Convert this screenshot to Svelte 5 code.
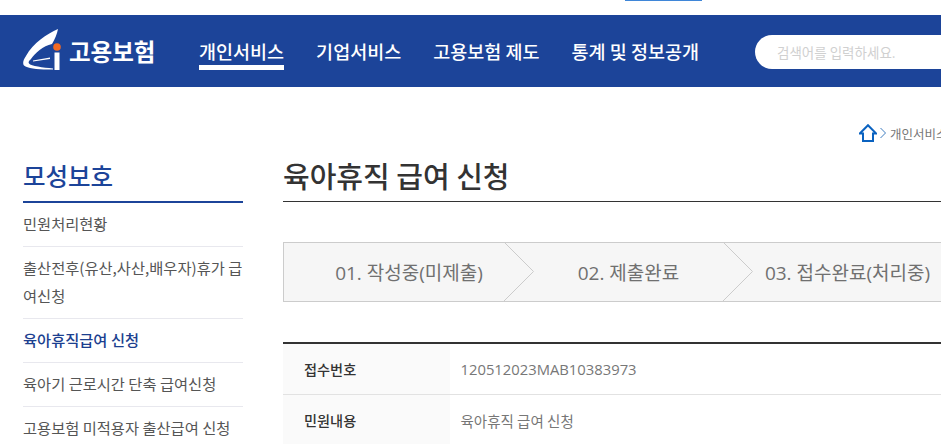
<script>
  const nav = ['개인서비스', '기업서비스', '고용보험 제도', '통계 및 정보공개'];
  const side = [
    { t: '민원처리현황' },
    { t: '출산전후(유산,사산,배우자)휴가 급여신청' },
    { t: '육아휴직급여 신청', on: true },
    { t: '육아기 근로시간 단축 급여신청' },
    { t: '고용보험 미적용자 출산급여 신청' }
  ];
  const steps = ['01. 작성중(미제출)', '02. 제출완료', '03. 접수완료(처리중)'];
  const rows = [
    { k: '접수번호', v: '120512023MAB10383973', num: true },
    { k: '민원내용', v: '육아휴직 급여 신청' }
  ];
</script>

<div class="page">
  <div class="strip"><span></span></div>
  <header>
    <div class="logo">
      <svg width="40" height="42" viewBox="0 0 40 42" aria-hidden="true">
        <path d="M35 0 C24 5 10 14 3 27 C0 31 -0.500 35 1 36.500 C5 39.500 16 41 30 40.500 L30 39.500 C20 38.500 8 37 6 34.500 C5 33 6 32 8 30 C12 24 20 17 29 15 C32 10 34 5 35 0 Z" fill="#fff"/>
        <path d="M10 31.500 L27 28.500 L27 30 L10 32.500 Z" fill="#fff"/>
        <circle cx="34" cy="18" r="3.800" fill="#f26a24"/>
        <rect x="31.500" y="23.500" width="5" height="17.500" fill="#fff"/>
      </svg>
      <span>고용보험</span>
    </div>
    <nav>
      {#each nav as n, i}
        <a class:on={i === 0}>{n}</a>
      {/each}
    </nav>
    <div class="search">검색어를 입력하세요.</div>
  </header>

  <div class="crumb">
    <svg width="18" height="18" viewBox="0 0 18 18" aria-hidden="true">
      <path d="M0.800 9.500 L9 1.200 L17.200 9.500 H14 V17 H4 V9.500 Z" fill="none" stroke="#0a62c0" stroke-width="2"/>
    </svg>
    <svg class="gt" width="6" height="12" viewBox="0 0 6 12" aria-hidden="true">
      <path d="M0.500 1 L5.500 6 L0.500 11" fill="none" stroke="#3f7cc0" stroke-width="1"/>
    </svg>
    <span>개인서비스</span>
  </div>

  <main>
    <aside>
      <h2>모성보호</h2>
      <ul>
        {#each side as s}
          <li class:on={s.on}>{s.t}</li>
        {/each}
      </ul>
    </aside>
    <section>
      <h1>육아휴직 급여 신청</h1>
      <div class="steps">
        {#each steps as s}
          <div class="step">
            <span>{s}</span>
            <svg class="chev" width="30" height="60" viewBox="0 0 30 60" aria-hidden="true">
              <path d="M0 0 L29.500 29.500 L0 59" fill="#f6f6f6" stroke="#cccccc" stroke-width="1"/>
            </svg>
          </div>
        {/each}
      </div>
      <div class="table">
        {#each rows as r}
          <div class="row">
            <div class="th">{r.k}</div>
            <div class="td" class:num={r.num}>{r.v}</div>
          </div>
        {/each}
      </div>
    </section>
  </main>
</div>

<style>
  :global(body) { margin: 0; background: #fff; }
  .page {
    width: 941px;
    height: 444px;
    overflow: hidden;
    font-family: "Noto Sans CJK KR", "Noto Sans", sans-serif;
    color: #555;
  }
  .strip { height: 15px; padding-left: 625px; }
  .strip span { display: block; width: 77px; height: 1px; background: #3f86d8; }
  header {
    height: 72px;
    background: #1c4499;
    display: flex;
    align-items: center;
    color: #fff;
  }
  .logo {
    width: 199px;
    flex: none;
    display: flex;
    align-items: center;
    box-sizing: border-box;
    padding-left: 23px;
    gap: 6px;
    font-size: 23.500px;
    font-weight: 700;
  }
  .logo svg { margin-top: -3px; flex: none; }
  nav { display: flex; gap: 32px; flex: none; width: 556px; }
  nav a {
    font-size: 18.500px;
    font-weight: 500;
    line-height: 28px;
    margin-top: 5px;
    border-bottom: 5px solid transparent;
    white-space: nowrap;
  }
  nav a.on { border-bottom-color: #fff; }
  .search {
    flex: none;
    width: 300px;
    height: 34px;
    line-height: 34px;
    margin-top: 1px;
    box-sizing: border-box;
    padding-left: 22px;
    background: #fff;
    border-radius: 17px 0 0 17px;
    color: #d0d0d0;
    font-size: 13.500px;
  }
  .crumb {
    display: flex;
    align-items: center;
    height: 20px;
    margin-top: 36px;
    padding-left: 859px;
    font-size: 12.500px;
    color: #777;
    white-space: nowrap;
    gap: 3px;
  }
  .crumb svg { flex: none; }
  .crumb span { flex: none; margin-left: 1px; }
  main { display: flex; padding: 0 0 0 23px; margin-top: 12px; gap: 40px; }
  aside { width: 220px; flex: none; }
  h2 {
    margin: 0;
    font-size: 24.500px;
    font-weight: 500;
    color: #1c4499;
    line-height: 34px;
    padding: 4px 0 8px;
    border-bottom: 2px solid #1c4499;
  }
  ul { list-style: none; margin: 0; padding: 0; }
  li {
    font-size: 15.300px;
    line-height: 28px;
    padding: 6px 0 9px;
    color: #555;
    border-bottom: 1px solid #e8e8ee;
  }
  li.on { color: #1c3f8f; font-weight: 500; }
  section { flex: none; width: 800px; }
  h1 {
    margin: 0;
    font-size: 29px;
    font-weight: 500;
    line-height: 40px;
    padding-top: 0;
    padding-bottom: 6px;
    color: #333;
    border-bottom: 1px solid #333;
  }
  .steps {
    display: flex;
    margin-top: 40px;
    height: 60px;
    box-sizing: border-box;
    border: 1px solid #ccc;
    border-right: 0;
    background: #f6f6f6;
  }
  .step {
    position: relative;
    width: 219px;
    flex: none;
    box-sizing: border-box;
    padding-left: 30px;
    display: flex;
    align-items: center;
    justify-content: center;
    font-family: "Open Sans", "Noto Sans CJK KR", sans-serif;
    font-size: 19px;
    color: #707070;
    white-space: nowrap;
  }
  .step:first-child { width: 220px; }
  .chev { position: absolute; top: -1px; left: 100%; z-index: 1; }
  .table { margin-top: 40px; border-top: 2px solid #333; }
  .row { display: flex; height: 51px; box-sizing: border-box; border-bottom: 1px solid #e2e2e2; }
  .th {
    width: 167px;
    box-sizing: border-box;
    background: #fafafa;
    padding-left: 21px;
    font-size: 14.200px;
    font-weight: 500;
    color: #333;
    display: flex;
    align-items: center;
  }
  .td {
    padding-left: 10.500px;
    font-size: 14.500px;
    color: #777;
    display: flex;
    align-items: center;
  }
  .td.num { font-family: "Open Sans", "Noto Sans CJK KR", sans-serif; font-size: 14.800px; }
</style>
